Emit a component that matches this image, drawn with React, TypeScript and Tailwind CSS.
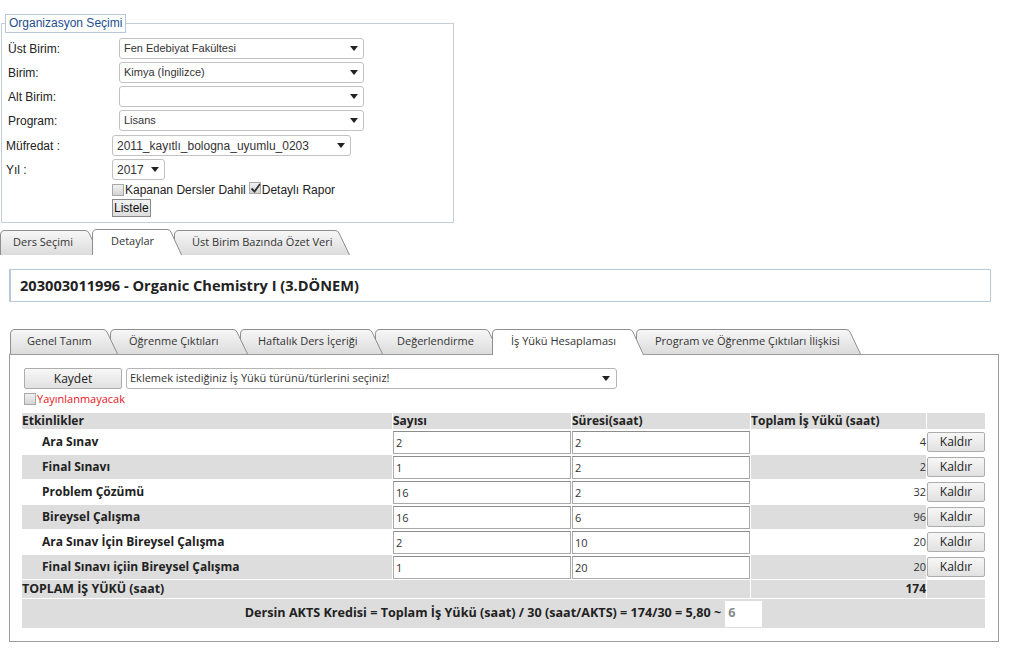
import React from "react";

const rows = [
  { name: "Ara Sınav", count: "2", dur: "2", total: "4" },
  { name: "Final Sınavı", count: "1", dur: "2", total: "2" },
  { name: "Problem Çözümü", count: "16", dur: "2", total: "32" },
  { name: "Bireysel Çalışma", count: "16", dur: "6", total: "96" },
  { name: "Ara Sınav İçin Bireysel Çalışma", count: "2", dur: "10", total: "20" },
  { name: "Final Sınavı içiin Bireysel Çalışma", count: "1", dur: "20", total: "20" },
];

const topTabs = [
  { label: "Ders Seçimi", w: 100, cls: "w-[100px] pl-[13px]" },
  { label: "Detaylar", w: 90, cls: "w-[90px] pl-[19px]", active: true },
  { label: "Üst Birim Bazında Özet Veri", w: 176, cls: "w-[176px] pl-[18px]" },
];

const innerTabs = [
  { label: "Genel Tanım", w: 108, cls: "w-[108px] pl-[17px]" },
  { label: "Öğrenme Çıktıları", w: 138, cls: "w-[138px] pl-[19px]" },
  { label: "Haftalık Ders İçeriği", w: 143, cls: "w-[143px] pl-[18px]" },
  { label: "Değerlendirme", w: 125, cls: "w-[125px] pl-[22px]" },
  { label: "İş Yükü Hesaplaması", w: 152, cls: "w-[152px] pl-[19px]", active: true },
  { label: "Program ve Öğrenme Çıktıları İlişkisi", w: 225, cls: "w-[225px] pl-[19px]" },
];

function Caret() {
  return (
    <svg width="8" height="5" viewBox="0 0 8 5" className="shrink-0">
      <path d="M0 0h8L4 5z" fill="#222" />
    </svg>
  );
}

function Select({ text, cls, textCls }: { text: string; cls: string; textCls?: string }) {
  return (
    <div className={`flex h-[21px] items-center justify-between rounded-[3px] border border-[#c2c2c2] bg-white pl-[4px] pr-[5px] text-[#333] ${cls}`}>
      <span className={textCls ?? "text-[11px]"}>{text}</span>
      <Caret />
    </div>
  );
}

function Check({ checked }: { checked?: boolean }) {
  return (
    <span className="relative inline-block h-[12px] w-[12px] shrink-0 border border-[#a9a9a9] bg-gradient-to-b from-[#f1f1f1] to-[#d4d4d4]">
      {checked && (
        <svg width="11" height="11" viewBox="0 0 11 11" className="absolute left-0 top-0">
          <path d="M1.5 5.5l3 3 5.5-7.5" stroke="#333" strokeWidth="1.8" fill="none" />
        </svg>
      )}
    </span>
  );
}

function Tab({ label, w, cls, active, z, panel, idx }: { label: string; w: number; cls: string; active?: boolean; z: number; panel?: boolean; idx: string }) {
  const h = active ? 26 : 25;
  const d = `M0.5 ${h} V5 Q0.5 0.5 5 0.5 H${w - 15} Q${w - 12} 0.5 ${w - 11} 3 L${w - 0.5} ${h}`;
  return (
    <div
      className={`relative shrink-0 first:ml-0 -ml-[8px] ${cls} ${active ? "h-[26px]" : panel ? "mb-px h-[25px]" : "h-[25px]"}`}
      style={{ zIndex: z }}
    >
      <svg width={w} height={h} className="absolute left-0 top-0">
        <defs>
          <linearGradient id={`g-${idx}`} x1="0" y1="0" x2="0" y2="1">
            <stop offset="0" stopColor="#f7f7f7" />
            <stop offset="1" stopColor="#dcdcdc" />
          </linearGradient>
        </defs>
        <path d={d + " Z"} fill={active ? "#ffffff" : `url(#g-${idx})`} stroke="none" />
        <path d={d} fill="none" stroke="#8e8e8e" strokeWidth="1" />
      </svg>
      <div className="relative flex h-[25px] items-center text-[11px] text-[#333]">{label}</div>
    </div>
  );
}

function Btn({ children, cls }: { children: React.ReactNode; cls: string }) {
  return (
    <button className={`flex items-center justify-center rounded-[2px] border border-[#adadad] bg-gradient-to-b from-[#f7f7f7] to-[#e1e1e1] text-[12px] text-[#222] ${cls}`}>
      {children}
    </button>
  );
}

export default function App() {
  return (
    <div className="min-h-[661px] w-[1024px] bg-white text-[#222]">
      {/* organizasyon */}
      <div className="pt-[14px] font-['Liberation_Sans',Arial,sans-serif] text-[12px]">
        <fieldset className="ml-px w-[453px] border border-[#c3ced9] px-[3px] pb-[5px]">
          <legend className="border border-[#b9c8d8] px-[3px] text-[12px] leading-[17px] text-[#1d4e8c]">Organizasyon Seçimi</legend>
          <div className="mt-[5px] flex flex-col">
            {[
              ["Üst Birim:", "Fen Edebiyat Fakültesi"],
              ["Birim:", "Kimya (İngilizce)"],
              ["Alt Birim:", ""],
              ["Program:", "Lisans"],
            ].map(([l, v]) => (
              <div key={l} className="mb-[3px] flex h-[21px] items-center">
                <span className="w-[114px] pl-[3px]">{l}</span>
                <Select text={v} cls="w-[245px]" />
              </div>
            ))}
            <div className="mb-[3px] mt-px flex h-[21px] items-center">
              <span className="w-[107px] pl-px">Müfredat :</span>
              <Select text="2011_kayıtlı_bologna_uyumlu_0203" cls="w-[239px]" textCls="text-[12px]" />
            </div>
            <div className="flex h-[21px] items-center">
              <span className="w-[107px] pl-px">Yıl :</span>
              <Select text="2017" cls="w-[53px]" textCls="text-[12px]" />
            </div>
            <div className="ml-[107px] mt-[3px] flex h-[13px] items-center">
              <Check />
              <span className="ml-px">Kapanan Dersler Dahil</span>
              <span className="ml-[3px]"><Check checked /></span>
              <span className="ml-px">Detaylı Rapor</span>
            </div>
            <div className="ml-[107px] mt-[3px]">
              <button className="h-[18px] border border-[#8a8a8a] bg-gradient-to-b from-[#f2f2f2] to-[#dddddd] px-[1px] text-[12px] leading-[16px] text-[#111]">
                Listele
              </button>
            </div>
          </div>
        </fieldset>
      </div>

      <div className="font-['Open_Sans',sans-serif]">
        {/* top tabs */}
        <div className="mt-[6px] flex items-end">
          {topTabs.map((t, i) => (
            <Tab key={t.label} {...t} idx={`t${i}`} z={t.active ? 20 : 10 - i} />
          ))}
        </div>

        {/* course header */}
        <div className="ml-[9px] mt-[14px] flex h-[33px] w-[982px] items-center border border-l-2 border-[#b9c9d7] pl-[9px] text-[14.6px] font-bold text-[#222]">
          203003011996 - Organic Chemistry I (3.DÖNEM)
        </div>

        {/* inner tabs */}
        <div className="relative z-10 -mb-px ml-[10px] mt-[27px] flex items-end">
          {innerTabs.map((t, i) => (
            <Tab key={t.label} {...t} panel idx={`i${i}`} z={t.active ? 20 : 10 - i} />
          ))}
        </div>

        <div className="ml-[9px] w-[990px] border border-[#9c9c9c] bg-white pb-[12px] pl-[11px] pt-[13px]">
          <div className="ml-[3px] flex items-center gap-[4px]">
            <Btn cls="h-[21px] w-[98px]">Kaydet</Btn>
            <div className="flex h-[21px] w-[491px] items-center justify-between rounded-[3px] border border-[#b5b5b5] bg-white pl-[3px] pr-[6px] text-[11px] text-[#333]">
              <span>Eklemek istediğiniz İş Yükü türünü/türlerini seçiniz!</span>
              <Caret />
            </div>
          </div>
          <div className="ml-[3px] mt-[3px] flex h-[14px] items-center text-[11px] text-[#e8141b]">
            <Check />
            <span className="ml-px">Yayınlanmayacak</span>
          </div>

          <table className="mt-[6px] w-[965px] table-fixed border-separate border-spacing-[1px] text-[12px]">
            <colgroup>
              <col className="w-[370px]" />
              <col className="w-[178px]" />
              <col className="w-[178px]" />
              <col className="w-[175px]" />
              <col className="w-[58px]" />
            </colgroup>
            <thead>
              <tr className="h-[16px] bg-[#dddddd] text-left font-bold">
                <td className="p-0 leading-[16px]">Etkinlikler</td>
                <td className="p-0 leading-[16px]">Sayısı</td>
                <td className="p-0 leading-[16px]">Süresi(saat)</td>
                <td className="p-0 leading-[16px]">Toplam İş Yükü (saat)</td>
                <td className="p-0" />
              </tr>
            </thead>
            <tbody>
              {rows.map((r, i) => {
                const bg = i % 2 === 1 ? "bg-[#dddddd]" : "bg-white";
                return (
                  <tr key={r.name} className="h-[24px]">
                    <td className={`p-0 pl-[20px] font-bold ${bg}`}>{r.name}</td>
                    <td className="p-0">
                      <input readOnly value={r.count} className="block h-[23px] w-full border border-[#a9a9a9] border-t-[#8c8c8c] px-[2px] text-[11px] text-[#333] outline-none" />
                    </td>
                    <td className="p-0">
                      <input readOnly value={r.dur} className="block h-[23px] w-full border border-[#a9a9a9] border-t-[#8c8c8c] px-[2px] text-[11px] text-[#333] outline-none" />
                    </td>
                    <td className={`p-0 text-right text-[11px] text-[#333] ${bg}`}>{r.total}</td>
                    <td className="p-0">
                      <Btn cls="h-[20px] w-[58px]">Kaldır</Btn>
                    </td>
                  </tr>
                );
              })}
              <tr className="h-[18px] font-bold">
                <td colSpan={3} className="bg-[#dddddd] p-0 text-[12.4px] leading-[18px]">TOPLAM İŞ YÜKÜ (saat)</td>
                <td className="bg-[#dddddd] p-0 text-right leading-[18px]">174</td>
                <td className="bg-[#dddddd] p-0" />
              </tr>
              <tr className="h-[29px]">
                <td colSpan={5} className="bg-[#dddddd] p-0">
                  <div className="flex items-center justify-center text-[12.6px] font-bold">
                    <span>Dersin AKTS Kredisi = Toplam İş Yükü (saat) / 30 (saat/AKTS) = 174/30 = 5,80 ~</span>
                    <span className="ml-[4px] flex h-[26px] w-[37px] items-center bg-white pl-[3px] text-[#8a8a8a]">6</span>
                  </div>
                </td>
              </tr>
            </tbody>
          </table>
        </div>
      </div>
    </div>
  );
}
